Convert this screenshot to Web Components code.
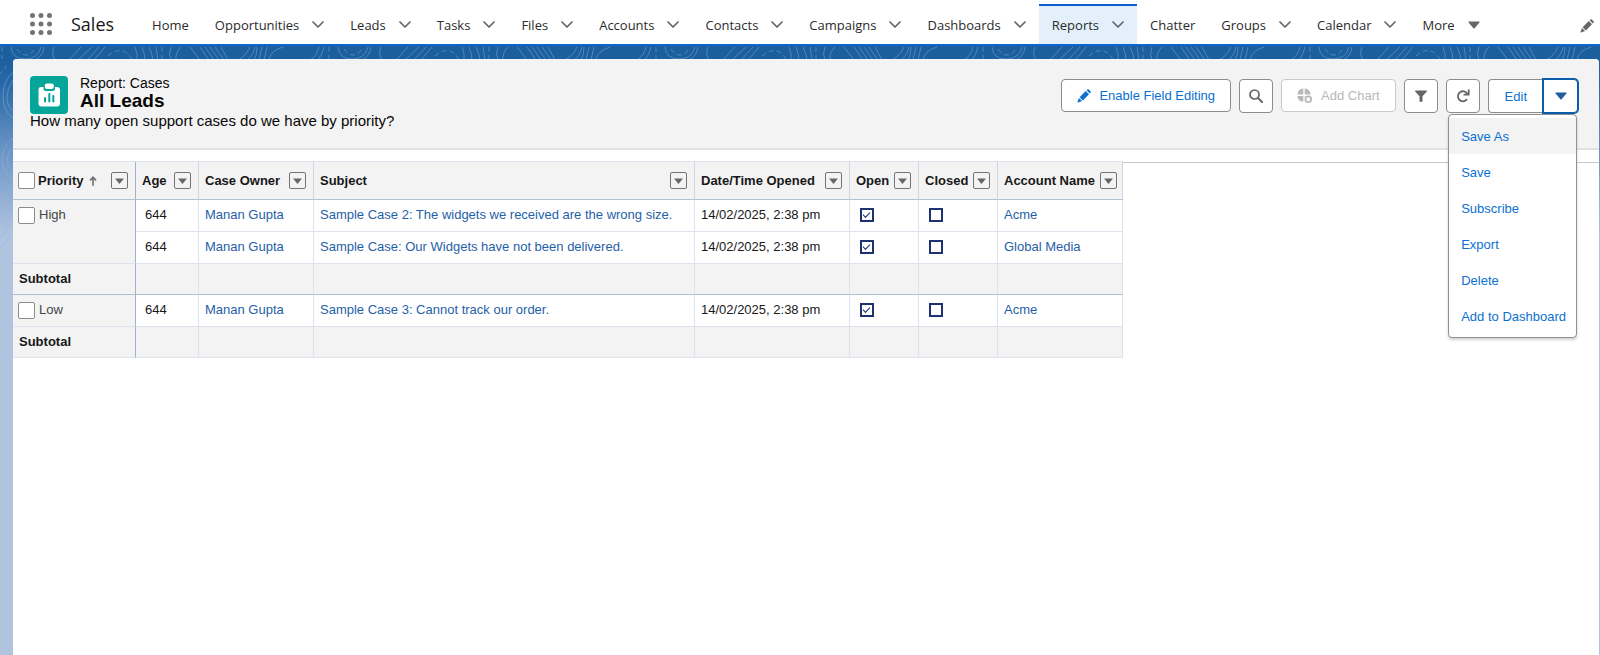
<!DOCTYPE html>
<html lang="en">
<head>
<meta charset="utf-8">
<title>All Leads | Sales</title>
<style>
  html, body {
    height: 100%;
    margin: 0;
  }

  body {
    font-family: "Liberation Sans", Arial, sans-serif;
    font-size: 13px;
    color: #181818;
    overflow: hidden;
  }
</style>
</head>
<body>
<sales-app></sales-app>

<script>
/**
 * Markup of the icons, by name
 */
const ICONS = {
  chevron: ["0 0 12 8", `<path d="M1 1l5 5 5-5" fill="none" stroke="currentColor" stroke-width="1.700" stroke-linecap="round" stroke-linejoin="round"/>`],
  caret: ["0 0 12 8", `<path d="M1 .6h10q.9 0 .4.8L6.600 7.200q-.6.700-1.200 0L.6 1.400Q.1.6 1 .6z" fill="currentColor"/>`],
  arrow: ["0 0 8 10", `<path d="M4 9.800V1.300M1 4.300l3-3 3 3" fill="none" stroke="currentColor" stroke-width="1.700"/>`],
  pencil: ["0 0 16 16", `<path d="M2.200 10.200l3.600 3.600L1.300 15.300q-.9.200-.6-.6zM3 9.300L10 2.300l3.700 3.700-7 7zM11 1.400l.8-.8q.8-.8 1.700 0l1.900 1.900q.8.900 0 1.700l-.8.800z" fill="currentColor"/>`],
  search: ["0 0 14 14", `<circle cx="5.500" cy="5.500" r="4.500" fill="none" stroke="currentColor" stroke-width="1.700"/><path d="M9 9l4 4" stroke="currentColor" stroke-width="2" stroke-linecap="round"/>`],
  chart: ["0 0 16 16", `<path d="M6.300.6v5.900H.4A6.600 6.600 0 0 1 6.300.6zM7.700.6a6.600 6.600 0 0 1 5.900 5.900H7.700zM.4 7.900h5.900v5.900A6.600 6.600 0 0 1 .4 7.900z" fill="currentColor"/><circle cx="11.300" cy="11.300" r="2.900" fill="none" stroke="currentColor" stroke-width="1.800"/><path d="M7.700 7.900h1.200L7.700 9.200z" fill="currentColor"/>`],
  filter: ["0 0 14 14", `<path d="M1.500 1.500h11q.8.200.3.900L8.500 7.300v4.800q0 .6-.5.6H6q-.5 0-.5-.6V7.300L1.200 2.400Q.7 1.700 1.500 1.500z" fill="currentColor"/>`],
  refresh: ["0 0 14 14", `<path d="M10.600 10.700A5 5 0 1 1 11.300 4.800" fill="none" stroke="currentColor" stroke-width="1.800" stroke-linecap="round"/><path d="M12.700 1.200v4.500H8.300" fill="none" stroke="currentColor" stroke-width="1.800" stroke-linecap="round" stroke-linejoin="round"/>`],
  report: ["0 0 38 38", `<path d="M11 11h2.500v1.500q0 2.500 2.500 2.500h6.500q2.500 0 2.500-2.500V11H27q3 0 3 3v13.500q0 3-3 3H11.500q-3 0-3-3V14q0-3 2.500-3z" fill="#fff"/><rect x="14.800" y="7.500" width="9" height="5.500" rx="2" fill="#fff"/><path d="M15 22v3.500M19.300 18v7.500M23.300 20v5.500" stroke="#06a59a" stroke-width="2" stroke-linecap="round"/>`],
  dots: ["0 0 22 22", [2.5, 11, 19.5].map(y => [2.5, 11, 19.5].map(x => `<circle cx="${x}" cy="${y}" r="2.500"/>`).join("")).join("")]
};

class UiIcon extends HTMLElement {
  constructor() {
    super();
    this.attachShadow({ mode: "open" });
  }

  connectedCallback() {
    const [box, shape] = ICONS[this.getAttribute("name")];
    this.shadowRoot.innerHTML = `
      <style>
        :host { display: inline-flex; flex: none; width: 12px; height: 12px; }
        svg { width: 100%; height: 100%; fill: currentColor; }
      </style>
      <svg viewBox="${box}" aria-hidden="true">${shape}</svg>
    `;
  }
}

/**
 * One tab of the navigation bar
 * menu - "chevron" or "caret", the sign after the label
 */
class NavTab extends HTMLElement {
  constructor() {
    super();
    this.attachShadow({ mode: "open" });
  }

  connectedCallback() {
    const menu = this.getAttribute("menu");
    const label = this.textContent;
    this.shadowRoot.innerHTML = `
      <style>
        :host {
          display: flex;
          align-items: center;
          gap: 13px;
          padding: 0 13px 1px;
          border-top: 2px solid transparent;
        }
        :host([active]) {
          background: #e3f0fb;
          border-top-color: #0b5cd0;
        }
        a { color: #2b2b2b; text-decoration: none; white-space: nowrap; }
        button { display: flex; padding: 0; border: 0; background: none; color: #666; }
        ui-icon { width: 12px; height: 8px; }
      </style>
      <a href="#"><slot></slot></a>
      ${menu ? `<button aria-label="${label} menu"><ui-icon name="${menu}"></ui-icon></button>` : ""}
    `;
  }
}

class NavBar extends HTMLElement {
  constructor() {
    super();
    this.attachShadow({ mode: "open" });
    this.shadowRoot.innerHTML = `
      <style>
        :host {
          display: flex;
          align-items: center;
          height: 40px;
          padding: 4px 6px 0 30px;
          background: #fff;
          border-bottom: 2px solid #0b66d0;
          font-family: "Open Sans", "Noto Sans", sans-serif;
        }
        button { display: flex; padding: 0; border: 0; background: none; color: #747474; }
        .launcher ui-icon { width: 22px; height: 22px; }
        .app { margin: 0 25px 0 19px; font-size: 18px; color: #181818; }
        nav { display: flex; flex: 1; align-self: stretch; }
        .edit { padding-top: 3px; color: #666; }
        .edit ui-icon { width: 14px; height: 14px; }
      </style>
      <button class="launcher" aria-label="App Launcher"><ui-icon name="dots"></ui-icon></button>
      <span class="app"><slot name="app"></slot></span>
      <nav><slot></slot></nav>
      <button class="edit" aria-label="Edit navigation"><ui-icon name="pencil"></ui-icon></button>
    `;
  }
}

/**
 * Contour lines behind the page
 */
class ThemeBackdrop extends HTMLElement {
  constructor() {
    super();
    this.attachShadow({ mode: "open" });
    this.shadowRoot.innerHTML = `
      <style>
        :host {
          display: block;
          background: linear-gradient(#1b5f9f 0, #1b5f9f 14px, #2a69a8 40px, #7098c8 110px, #b0c4df 190px);
        }
        svg { width: 100%; height: 210px; }
      </style>
      <svg aria-hidden="true">
        <defs>
          <pattern id="lines" width="327" height="210" patternUnits="userSpaceOnUse">
            <g fill="none" stroke="#8fb5dc" stroke-opacity=".45">
              <path d="M11 1q1 12 14 12T41 1M35 14q8-4 9-13M54 1q-3 7 1 13M69 14l12-13M78 14L92 1M87 14L99 1M94 14l11-13"/>
              <path d="M2 1v12M17 3q4 6 9 6t8-5M108 10q10-9 19-3 4 4 5 7M162 1v13" stroke-dasharray="5 3"/>
              <path d="M135 1q3 7 2 13M142 1q3 7 3 13M149 1q3 6 4 13M156 1l2 13M171 1q-3 7 0 13M181 1q-6 6-5 13M190 1l10 13M200 1l9 13M205 1l9 13M210 1l9 13M215 1l9 13M221 1l7 13"/>
              <path d="M238 14q8-4 12-13M247 14q6-4 8-13M254 14q3-5 3-13M259 14l3-13M264 14l3-13M269 14q1-9 14-13M310 14q7-4 9-13M318 14q4-5 6-13"/>
              <path d="M13 26Q3 35 3 50t10 22M13 34q-6 8-6 17t6 14M13 92Q2 100 2 114t11 18M13 101q-6 6-6 13t6 11M1 170q2-8 12-9M1 150q5-7 12-5M0 192l13-16M0 202l13-15"/>
              <path d="M0 28q5-4 8-12M2 134q5 6 11 6M5 182q2-12 8-13" stroke-dasharray="4 3"/>
            </g>
          </pattern>
        </defs>
        <rect width="100%" height="210" fill="url(#lines)"/>
      </svg>
    `;
  }
}

/**
 * Button of the report header
 * icon - name of the icon, label - name of a button without text
 */
class ActionButton extends HTMLElement {
  constructor() {
    super();
    this.attachShadow({ mode: "open" });
  }

  connectedCallback() {
    const icon = this.getAttribute("icon");
    const label = this.getAttribute("label");
    this.shadowRoot.innerHTML = `
      <style>
        :host { display: flex; }
        button {
          box-sizing: border-box;
          display: flex;
          align-items: center;
          justify-content: center;
          gap: 8px;
          height: 33px;
          padding: 0 15px;
          border: 1px solid #8c8c8c;
          border-radius: 4px;
          background: #fff;
          color: #0b70d0;
          font: inherit;
          white-space: nowrap;
        }
        ui-icon { width: 14px; height: 14px; }
        :host([square]) button { width: 34px; height: 34px; padding: 0; color: #666; }
        :host([square]) slot { display: none; }
        :host([first]) button {
          height: 34px;
          padding: 0 16px;
          border-right: 0;
          border-radius: 4px 0 0 4px;
        }
        :host([disabled]) button { border-color: #c9c9c9; color: #b8b8b8; }
        :host([disabled]) ui-icon { width: 16px; height: 16px; }
        :host([focused]) button {
          width: 35px;
          border-color: #0b5cab;
          border-radius: 0 4px 4px 0;
          box-shadow: 0 0 0 1px #0b5cab;
          color: #215c9e;
        }
        :host([focused]) ui-icon { width: 12px; height: 8px; }
      </style>
      <button ${label ? `aria-label="${label}"` : ""} ${this.hasAttribute("disabled") ? "disabled" : ""}>
        ${icon ? `<ui-icon name="${icon}"></ui-icon>` : ""}<slot></slot>
      </button>
    `;
  }
}

/**
 * Drop-down with the actions of the report
 */
class ActionMenu extends HTMLElement {
  constructor() {
    super();
    this.attachShadow({ mode: "open" });
    this.shadowRoot.innerHTML = `
      <style>
        :host { display: block; }
        ul {
          margin: 0;
          padding: 3px 0;
          list-style: none;
          background: #fff;
          border: 1px solid #919191;
          border-radius: 4px;
          box-shadow: 0 2px 3px rgba(0, 0, 0, 0.18);
        }
        button {
          display: block;
          width: 100%;
          height: 36px;
          padding: 0 10px 0 12px;
          border: 0;
          background: none;
          color: #0b70d0;
          font: inherit;
          text-align: left;
          white-space: nowrap;
        }
        li:first-child button { background: #f3f3f3; }
      </style>
      <ul>
        ${["Save As", "Save", "Subscribe", "Export", "Delete", "Add to Dashboard"]
          .map(item => `<li><button>${item}</button></li>`).join("")}
      </ul>
    `;
  }
}

class ReportHeader extends HTMLElement {
  constructor() {
    super();
    this.attachShadow({ mode: "open" });
    this.shadowRoot.innerHTML = `
      <style>
        :host {
          box-sizing: border-box;
          display: flex;
          justify-content: space-between;
          align-items: flex-start;
          height: 91px;
          padding: 17px 21px 0 17px;
          background: #f3f3f3;
          border-bottom: 2px solid #e2e2e2;
          border-radius: 4px 4px 0 0;
        }
        .title { display: flex; gap: 12px; height: 38px; }
        .title > ui-icon { width: 38px; height: 38px; border-radius: 4px; background: #06a59a; }
        .kind, h1, .about { margin: 0; color: #080707; }
        .kind { font-size: 14px; line-height: 14px; }
        h1 { font-size: 19px; line-height: 22px; }
        .about { font-size: 15px; line-height: 14px; }
        .actions { display: flex; align-items: flex-start; gap: 8px; padding-top: 3px; }
        .group { display: flex; position: relative; }
        action-menu { position: absolute; top: 35px; right: 1px; z-index: 1; }
      </style>
      <div>
        <div class="title">
          <ui-icon name="report"></ui-icon>
          <div>
            <p class="kind"><slot name="kind"></slot></p>
            <h1><slot name="name"></slot></h1>
          </div>
        </div>
        <p class="about"><slot name="about"></slot></p>
      </div>
      <div class="actions">
        <action-button icon="pencil">Enable Field Editing</action-button>
        <action-button square icon="search" label="Search"></action-button>
        <action-button disabled icon="chart">Add Chart</action-button>
        <action-button square icon="filter" label="Filter"></action-button>
        <action-button square icon="refresh" label="Refresh"></action-button>
        <div class="group">
          <action-button first>Edit</action-button>
          <action-button square focused icon="caret" label="More actions"></action-button>
          <action-menu></action-menu>
        </div>
      </div>
    `;
  }
}

const COLUMNS = [
  ["Priority", 123], ["Age", 63], ["Case Owner", 115], ["Subject", 381],
  ["Date/Time Opened", 155], ["Open", 69], ["Closed", 79], ["Account Name", 125]
];

const GROUPS = [
  {
    priority: "High",
    cases: [
      ["Manan Gupta", "Sample Case 2: The widgets we received are the wrong size.", "Acme"],
      ["Manan Gupta", "Sample Case: Our Widgets have not been delivered.", "Global Media"]
    ]
  },
  {
    priority: "Low",
    cases: [["Manan Gupta", "Sample Case 3: Cannot track our order.", "Acme"]]
  }
];

class ReportTable extends HTMLElement {
  constructor() {
    super();
    this.attachShadow({ mode: "open" });
    this.shadowRoot.innerHTML = `
      <style>
        :host { display: flex; }
        .rest { flex: 1; margin-top: 1px; border-top: 1px solid #c9c9c9; }
        table {
          table-layout: fixed;
          width: 1110px;
          border-collapse: separate;
          border-spacing: 0;
          border-top: 1px solid #dde3ec;
        }
        th, td {
          box-sizing: border-box;
          padding: 0 6px 2px;
          border-right: 1px solid #dde3ec;
          border-bottom: 1px solid #dde3ec;
          text-align: left;
          font-weight: normal;
          white-space: nowrap;
        }
        td { height: 32px; background: #fff; }
        thead th {
          height: 38px;
          padding: 0 7px 0 6px;
          background: #f3f3f3;
          border-right-color: #cdd7e4;
          border-bottom-color: #b3c0d3;
          font-weight: bold;
        }
        thead div { display: flex; align-items: center; gap: 5px; }
        thead button {
          box-sizing: border-box;
          display: flex;
          flex: none;
          align-items: center;
          justify-content: center;
          width: 17px;
          height: 17px;
          margin-left: auto;
          padding: 0;
          border: 1px solid #747474;
          border-radius: 2px;
          background: #f3f3f3;
          color: #666;
        }
        thead button ui-icon { width: 9px; height: 6px; }
        thead .sort { width: 8px; height: 10px; color: #747474; }
        tr > .key { background: #f3f3f3; border-right-color: #a3b1c6; }
        tbody .key { vertical-align: top; color: #444; }
        label { display: flex; align-items: center; gap: 3px; }
        tbody label { padding-top: 7px; gap: 4px; align-items: flex-start; }
        .key:has(label) { padding-left: 5px; }
        .pick {
          appearance: none;
          box-sizing: border-box;
          width: 17px;
          height: 17px;
          margin: 0;
          border: 1px solid #8c8c8c;
          border-radius: 2px;
          background: #fff;
        }
        .sum > * { height: 31px; background: #f3f3f3; }
        .sum .key { vertical-align: middle; font-weight: bold; color: #181818; }
        tbody:not(:last-child) .sum > * { border-bottom-color: #b3c0d3; }
        .age { padding-left: 9px; }
        .flag { padding-left: 10px; }
        .flag input {
          appearance: none;
          box-sizing: border-box;
          display: block;
          width: 14px;
          height: 14px;
          margin: 0;
          border: 2px solid #1d326f;
        }
        .flag input:checked::after {
          content: "";
          display: block;
          width: 6px;
          height: 3px;
          margin: 2px 0 0 1px;
          border-left: 1px solid #14296b;
          border-bottom: 1px solid #14296b;
          transform: rotate(-45deg);
        }
        a { color: #1f61a8; text-decoration: none; }
      </style>
      <table>
        <colgroup>${COLUMNS.map(([, width]) => `<col style="width: ${width}px">`).join("")}</colgroup>
        <thead>
          <tr>${COLUMNS.map(this._head).join("")}</tr>
        </thead>
        ${GROUPS.map(group => this._group(group)).join("")}
      </table>
      <div class="rest"></div>
    `;
  }

  _head([name], i) {
    const title = i === 0
      ? `<label><input class="pick" type="checkbox">${name}</label><ui-icon class="sort" name="arrow"></ui-icon>`
      : `<span>${name}</span>`;
    return `<th scope="col" class="${i === 0 ? "key" : ""}"><div>${title}<button aria-label="${name} menu"><ui-icon name="caret"></ui-icon></button></div></th>`;
  }

  _group({ priority, cases }) {
    const rows = cases.map(([owner, subject, account], i) => `
      <tr>
        ${i === 0 ? `<th class="key" scope="rowgroup" rowspan="${cases.length}"><label><input class="pick" type="checkbox">${priority}</label></th>` : ""}
        <td class="age">644</td>
        <td><a href="#">${owner}</a></td>
        <td><a href="#">${subject}</a></td>
        <td>14/02/2025, 2:38 pm</td>
        <td class="flag"><input type="checkbox" aria-label="Open" checked></td>
        <td class="flag"><input type="checkbox" aria-label="Closed"></td>
        <td><a href="#">${account}</a></td>
      </tr>`).join("");
    return `<tbody>${rows}<tr class="sum"><th class="key" scope="row">Subtotal</th>${"<td></td>".repeat(7)}</tr></tbody>`;
  }
}

class SalesApp extends HTMLElement {
  constructor() {
    super();
    this.attachShadow({ mode: "open" });
    this.shadowRoot.innerHTML = `
      <style>
        :host { display: flex; flex-direction: column; height: 100%; }
        .stage { display: flex; flex: 1; position: relative; }
        theme-backdrop { position: absolute; inset: 0; }
        main {
          position: relative;
          flex: 1;
          margin: 13px 1px 0 13px;
          background: #fff;
          border-radius: 4px 4px 0 0;
        }
        report-table { margin-top: 11px; }
      </style>
      <nav-bar>
        <span slot="app">Sales</span>
        <nav-tab>Home</nav-tab>
        <nav-tab menu="chevron">Opportunities</nav-tab>
        <nav-tab menu="chevron">Leads</nav-tab>
        <nav-tab menu="chevron">Tasks</nav-tab>
        <nav-tab menu="chevron">Files</nav-tab>
        <nav-tab menu="chevron">Accounts</nav-tab>
        <nav-tab menu="chevron">Contacts</nav-tab>
        <nav-tab menu="chevron">Campaigns</nav-tab>
        <nav-tab menu="chevron">Dashboards</nav-tab>
        <nav-tab menu="chevron" active>Reports</nav-tab>
        <nav-tab>Chatter</nav-tab>
        <nav-tab menu="chevron">Groups</nav-tab>
        <nav-tab menu="chevron">Calendar</nav-tab>
        <nav-tab menu="caret">More</nav-tab>
      </nav-bar>
      <div class="stage">
        <theme-backdrop></theme-backdrop>
        <main>
          <report-header>
            <span slot="kind">Report: Cases</span>
            <span slot="name">All Leads</span>
            <span slot="about">How many open support cases do we have by priority?</span>
          </report-header>
          <report-table></report-table>
        </main>
      </div>
    `;
  }
}

customElements.define("ui-icon", UiIcon);
customElements.define("nav-tab", NavTab);
customElements.define("nav-bar", NavBar);
customElements.define("theme-backdrop", ThemeBackdrop);
customElements.define("action-button", ActionButton);
customElements.define("action-menu", ActionMenu);
customElements.define("report-header", ReportHeader);
customElements.define("report-table", ReportTable);
customElements.define("sales-app", SalesApp);
</script>
</body>
</html>
